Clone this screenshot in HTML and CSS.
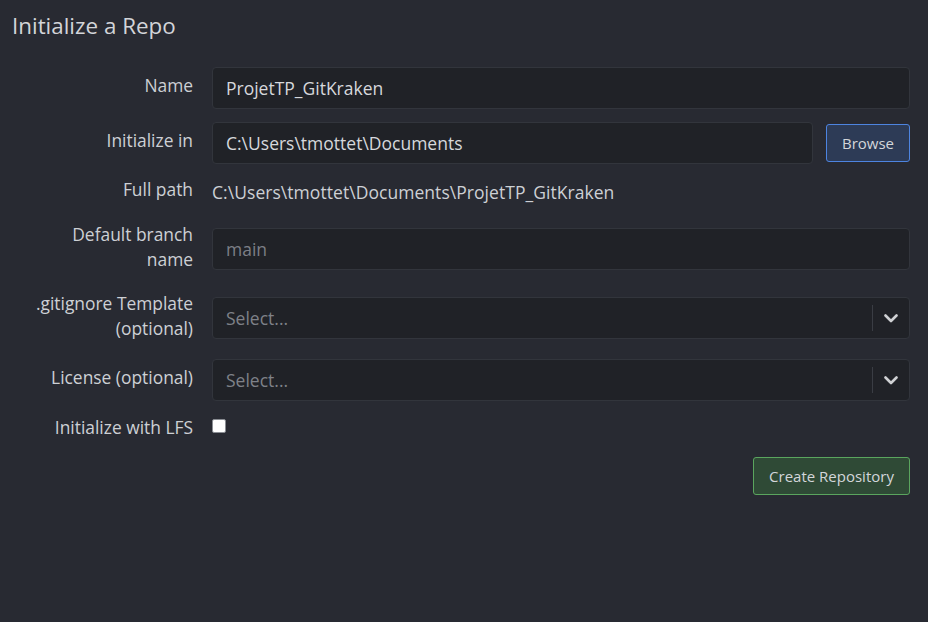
FILE: index.html
```html
<!DOCTYPE html>
<html>
<head>
<meta charset="utf-8">
<link rel="stylesheet" href="styles.css">
</head>
<body>
<div class="page">
  <h1 class="title">Initialize a Repo</h1>
  <form class="form">
    <div class="row r-name">
      <label class="label">Name</label>
      <div class="field"><div class="input">ProjetTP_GitKraken</div></div>
    </div>
    <div class="row r-init">
      <label class="label">Initialize in</label>
      <div class="field with-btn">
        <div class="input">C:\Users\tmottet\Documents</div>
        <button type="button" class="btn btn-blue">Browse</button>
      </div>
    </div>
    <div class="row r-path">
      <label class="label">Full path</label>
      <div class="field"><div class="plain">C:\Users\tmottet\Documents\ProjetTP_GitKraken</div></div>
    </div>
    <div class="row r-branch">
      <label class="label">Default branch<br>name</label>
      <div class="field"><div class="input placeholder">main</div></div>
    </div>
    <div class="row r-ignore">
      <label class="label">.gitignore Template<br>(optional)</label>
      <div class="field">
        <div class="select">
          <span class="placeholder">Select...</span>
          <span class="sep"></span>
          <svg class="chev" width="14" height="9" viewBox="0 0 14 9"><path d="M1.5 1.5 L7 7 L12.5 1.5" fill="none" stroke="#cfd1d4" stroke-width="2.6" stroke-linecap="round" stroke-linejoin="round"/></svg>
        </div>
      </div>
    </div>
    <div class="row r-license">
      <label class="label">License (optional)</label>
      <div class="field">
        <div class="select">
          <span class="placeholder">Select...</span>
          <span class="sep"></span>
          <svg class="chev" width="14" height="9" viewBox="0 0 14 9"><path d="M1.5 1.5 L7 7 L12.5 1.5" fill="none" stroke="#cfd1d4" stroke-width="2.6" stroke-linecap="round" stroke-linejoin="round"/></svg>
        </div>
      </div>
    </div>
    <div class="row r-lfs">
      <label class="label">Initialize with LFS</label>
      <div class="field"><span class="checkbox"></span></div>
    </div>
    <div class="actions">
      <button type="button" class="btn btn-green">Create Repository</button>
    </div>
  </form>
</div>
</body>
</html>
```
FILE: styles.css
```css
html, body {
  margin: 0;
  padding: 0;
  background: #282a32;
  height: 100%;
}
body {
  font-family: "Open Sans", "Noto Sans", sans-serif;
  color: #cdd0d5;
}
.page {
  padding: 10px 18px 0 12px;
}
.title {
  margin: 0;
  font-size: 22.4px;
  font-weight: 400;
  line-height: 32px;
  color: #d3d5d9;
}
.form {
  display: flex;
  flex-direction: column;
  margin-top: 25px;
}
.row {
  display: grid;
  grid-template-columns: 181px 1fr;
  column-gap: 19px;
  align-items: center;
}
.label {
  text-align: right;
  font-size: 17.4px;
  line-height: 25px;
  margin: -12px 0;
  padding-bottom: 5px;
  color: #cdd0d5;
  white-space: nowrap;
}
.field {
  display: flex;
  align-items: center;
  min-width: 0;
}
.input, .select {
  box-sizing: border-box;
  flex: 1;
  height: 42px;
  background: #202227;
  border: 1px solid #32353c;
  border-radius: 4px;
  display: flex;
  align-items: center;
  padding: 0 13px;
  font-size: 17.5px;
  color: #d6d8dc;
}
.placeholder { color: #7e8188; }
.input.placeholder { color: #7c7f86; }
.with-btn { gap: 13px; }
.btn {
  font-family: "Open Sans", "Noto Sans", sans-serif;
  font-size: 15px;
  color: #d3d6da;
  border-radius: 3px;
  cursor: pointer;
  padding: 0;
}
.btn-blue {
  width: 84px;
  height: 38px;
  background: #2d3b56;
  border: 1px solid #4d84e0;
}
.btn-green {
  width: 157px;
  height: 38px;
  background: #2f4a36;
  border: 1px solid #5aa55e;
}
.plain {
  font-size: 17.5px;
  letter-spacing: 0.05px;
  line-height: 25px;
  color: #cdd0d5;
  white-space: nowrap;
}
.select { padding-right: 0; }
.select .placeholder { flex: 1; }
.sep {
  width: 1px;
  height: 26px;
  background: #3a3d44;
}
.chev { margin: 1px 11px 0 11px; }
.checkbox {
  display: block;
  width: 14px;
  height: 14px;
  background: #ffffff;
  border-radius: 2px;
  box-sizing: border-box;
  border: 1px solid #8a8d93;
}
.r-name { margin-top: 0; }
.r-init { margin-top: 13px; }
.r-path { margin-top: 15px; height: 26px; }
.r-branch { margin-top: 23px; }
.r-ignore { margin-top: 27px; }
.r-license { margin-top: 20px; }
.r-lfs { margin-top: 12px; height: 26px; }
.r-lfs .label { padding-bottom: 0; margin-top: -9px; }
.actions {
  display: flex;
  justify-content: flex-end;
  margin-top: 18px;
}
```
